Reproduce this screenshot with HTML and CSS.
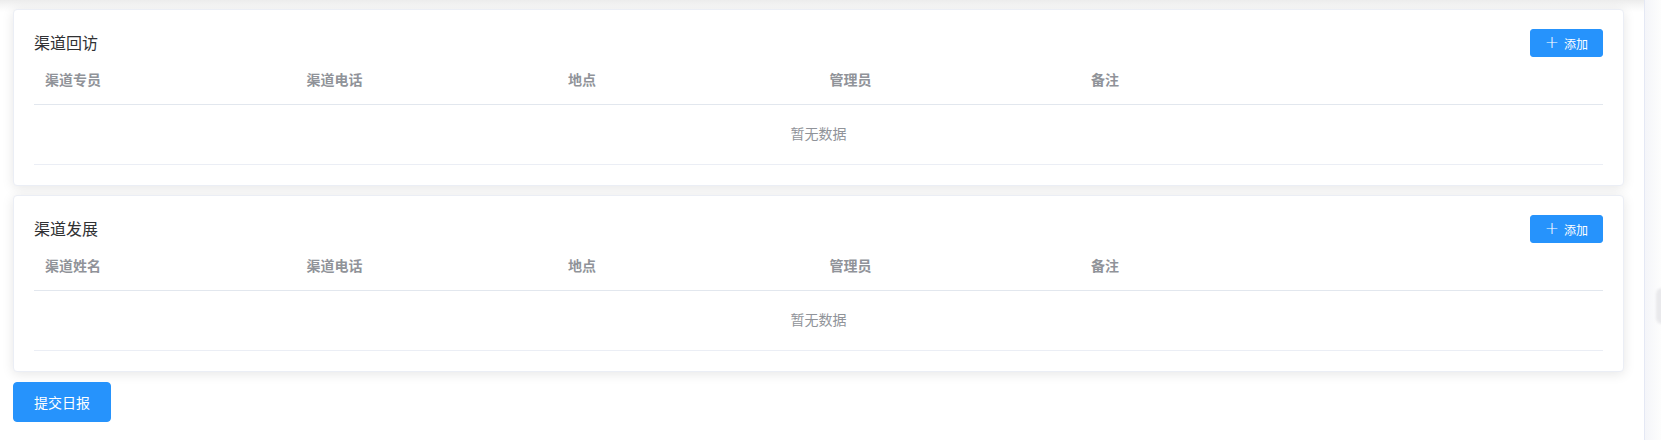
FILE: index.html
```html
<!DOCTYPE html>
<html lang="zh">
<head>
<meta charset="utf-8">
<link rel="stylesheet" href="styles.css">
</head>
<body>
<div class="page">
  <main class="main">
    <section class="card">
      <div class="card-head">
        <span class="card-title">渠道回访</span>
        <button class="btn-add"><span class="plus">+</span>添加</button>
      </div>
      <div class="table">
        <div class="thead">
          <div class="th">渠道专员</div>
          <div class="th">渠道电话</div>
          <div class="th">地点</div>
          <div class="th">管理员</div>
          <div class="th">备注</div>
          <div class="th"></div>
        </div>
        <div class="empty">暂无数据</div>
      </div>
    </section>
    <section class="card">
      <div class="card-head">
        <span class="card-title">渠道发展</span>
        <button class="btn-add"><span class="plus">+</span>添加</button>
      </div>
      <div class="table">
        <div class="thead">
          <div class="th">渠道姓名</div>
          <div class="th">渠道电话</div>
          <div class="th">地点</div>
          <div class="th">管理员</div>
          <div class="th">备注</div>
          <div class="th"></div>
        </div>
        <div class="empty">暂无数据</div>
      </div>
    </section>
    <div class="actions">
      <button class="btn-submit">提交日报</button>
    </div>
  </main>
  <aside class="side">
    <div class="side-tab"></div>
  </aside>
</div>
</body>
</html>
```

FILE: styles.css
```css
* { box-sizing: border-box; }
html, body { margin: 0; padding: 0; }
body {
  width: 1661px;
  height: 440px;
  overflow: hidden;
  background: #fff;
  font-family: "Noto Sans CJK SC", "Liberation Sans", sans-serif;
  color: #303133;
}
.page {
  display: flex;
  height: 440px;
  background: linear-gradient(#ececec, #f7f7f7 6px, #fff 12px);
}
.main {
  width: 1644px;
  flex: none;
  padding: 9px 20px 0 13px;
  display: flex;
  flex-direction: column;
  gap: 9px;
}
.card {
  background: #fff;
  border: 1px solid #ebeef5;
  border-radius: 4px;
  box-shadow: 0 2px 12px 0 rgba(0, 0, 0, 0.1);
  padding: 19px 20px 20px;
}
.card-head {
  display: flex;
  justify-content: space-between;
  align-items: center;
  height: 28px;
}
.card-title {
  font-size: 16px;
  line-height: 28px;
  color: #303133;
  margin-top: -2px;
}
.btn-add {
  height: 28px;
  width: 73px;
  padding: 0;
  border: 1px solid #2693fc;
  border-radius: 3px;
  background: #2693fc;
  color: #fff;
  font-family: inherit;
  font-size: 12px;
  display: flex;
  align-items: center;
  justify-content: center;
  gap: 5px;
}
.plus {
  font-size: 17px;
  font-weight: 300;
  line-height: 12px;
  font-family: "DejaVu Sans", sans-serif;
  display: inline-block;
  margin-top: -2px;
}
.table {
  border-bottom: 1px solid #ebeef5;
}
.thead {
  display: grid;
  grid-template-columns: repeat(6, 1fr);
  height: 48px;
  border-bottom: 1px solid #e2e7ee;
}
.th {
  padding-left: 11px;
  font-size: 14px;
  font-weight: bold;
  color: #909399;
  line-height: 45px;
}
.empty {
  height: 59px;
  line-height: 57px;
  text-align: center;
  font-size: 14px;
  color: #909399;
}
.actions {
  display: flex;
  padding-top: 1px;
}
.btn-submit {
  width: 98px;
  height: 40px;
  border: 1px solid #2693fc;
  border-radius: 4px;
  background: #2693fc;
  color: #fff;
  font-family: inherit;
  font-size: 14px;
  padding: 0;
}
.side {
  flex: 1;
  border-left: 1px solid #e4e8f4;
  background: linear-gradient(90deg, #f4f5f9, #fdfdfd);
  position: relative;
}
.side-tab {
  position: absolute;
  left: 11px;
  top: 288px;
  width: 10px;
  height: 36px;
  border-radius: 6px 0 0 6px;
  background: #e9e9ec;
  filter: blur(1px);
}
```
